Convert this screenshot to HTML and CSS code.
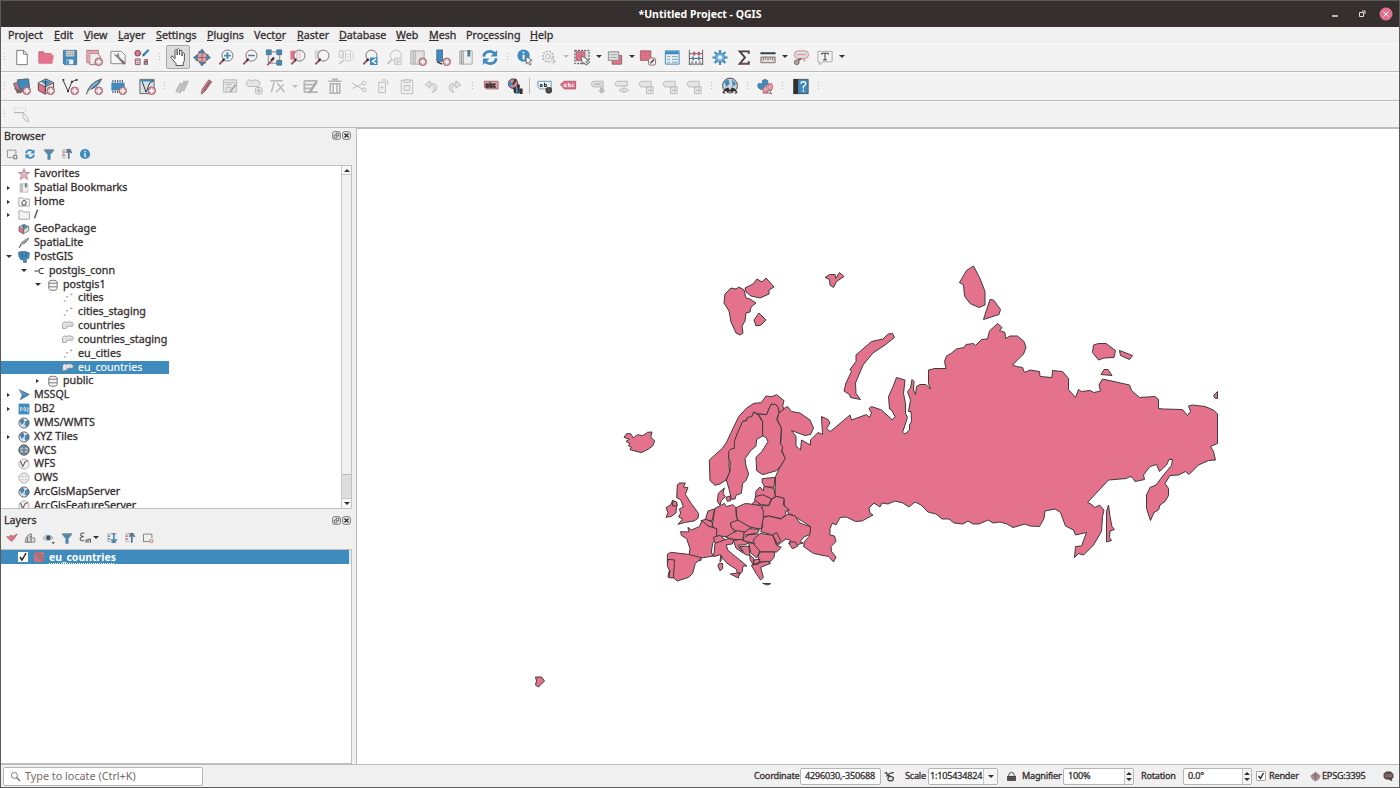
FILE: index.html
```html
<!DOCTYPE html>
<html lang="en">
<head>
<meta charset="utf-8">
<title>*Untitled Project - QGIS</title>
<link rel="stylesheet" href="styles.css">
</head>
<body>
<svg class="defs" width="0" height="0" fill="none" stroke-width="1.2">
<defs>
<g id="plus"><circle cx="15" cy="14.5" r="4" fill="#d8a5af" stroke="#a3606e"/><path d="M15 12v5M12.500 14.500h5" stroke="#fff" stroke-width="1.500"/></g>
<g id="gplus"><rect x="11.500" y="11" width="7" height="7" rx="2" fill="#e8e8e8" stroke="#b8b8b8"/><path d="M15 12.500v4M13 14.500h4" stroke="#aaa"/></g>
<g id="lens"><circle cx="11.500" cy="8" r="5.800" fill="#f4f4f4" stroke="#77696b"/><path d="M7.500 12.500L3 17" stroke="#a5576a" stroke-width="2.200"/><path d="M8.500 11.200L6.500 13.500" stroke="#352f30" stroke-width="2"/></g>
<symbol id="new" viewBox="0 0 20 20"><path d="M4.500 2.500h7l4 4v11h-11z" fill="#fff" stroke="#777"/><path d="M11.500 2.500v4h4" stroke="#777"/></symbol>
<symbol id="open" viewBox="0 0 20 20"><path d="M2.500 16V4h5l1 2h7v3" fill="#e5728c" stroke="#c06578"/><path d="M3 16.500l1.500-9h13.500l-1.500 9z" fill="#e5728c" stroke="#d88b9b" stroke-dasharray="1 1"/></symbol>
<symbol id="save" viewBox="0 0 20 20"><path d="M3 2.500h14v15H4.500L3 16z" fill="#3f8bbd" stroke="#51758c"/><path d="M5.500 3h9v6h-9z" fill="#ccc"/><path d="M6 5h8M6 7h8" stroke="#888" stroke-dasharray="1 1"/><path d="M6.500 12h7v5h-7z" fill="#eee"/><path d="M8 13v4" stroke="#3f8bbd" stroke-width="2"/></symbol>
<symbol id="layout" viewBox="0 0 20 20"><path d="M2.500 2.500h12v13h-12z" fill="#ddd" stroke="#9b7078"/><path d="M5.500 17.500v-12h8l3 3v4" fill="#eee" stroke="#9b7078"/><path d="M3 3h3v12H3zM6 3h8v2H6z" fill="#e5a0ad"/><path d="M5.500 17.500h7" stroke="#9b7078"/><use href="#plus"/></symbol>
<symbol id="manager" viewBox="0 0 20 20"><path d="M2.500 3.500h11l4 4v9h-15z" fill="#f7f7f7" stroke="#888"/><path d="M8 7l8 9" stroke="#888" stroke-width="2.400"/><path d="M6 6l2 3 3-1-1-3" stroke="#777"/><path d="M14 13l3 4" stroke="#8b6069" stroke-width="2"/></symbol>
<symbol id="style" viewBox="0 0 20 20"><circle cx="5.500" cy="5.500" r="3" fill="#e5728c" stroke="#6c4a50"/><path d="M11 8l6-6" stroke="#3f8bbd" stroke-width="2.500"/><path d="M10.500 8.500l2-2" stroke="#352f30"/><path d="M3 11.500h5v6H3z" fill="#ddd" stroke="#85575f"/><path d="M4 13h3M4 15.500h3" stroke="#c46a7c"/><path d="M12 12.500h3.500v5M15 14.500h-2.500v2.500h3" stroke="#85575f" stroke-width="1.400"/></symbol>
<symbol id="hand" viewBox="0 0 20 20"><path d="M7 12V3.500q1.200-2 2.200 0V8 2.500q1.300-1.800 2.300 0V8l.3-4.200q1.300-1.400 2.200.2V9l.4-3q1.400-1 2 .6V13q-.2 2-1.200 3v2.500H8V16.500L3 10.500q0-2.200 2-1.200z" fill="#fff" stroke="#555"/></symbol>
<symbol id="panmap" viewBox="0 0 20 20"><path d="M5 5h10v10H5z" fill="#e5a0ad" stroke="#966" transform="rotate(20 10 10)"/><path d="M10 1l3 4H7zM10 19l3-4H7zM1 10l4-3v6zM19 10l-4-3v6z" fill="#3f8bbd" stroke="#51687a" stroke-width=".8"/><path d="M10 6v8M6 10h8" stroke="#80636a"/></symbol>
<symbol id="zin" viewBox="0 0 20 20"><use href="#lens"/><path d="M11.500 4.500v7M8 8h7" stroke="#3f8bbd" stroke-width="2"/></symbol>
<symbol id="zout" viewBox="0 0 20 20"><use href="#lens"/><path d="M8 8h7" stroke="#5f7c90" stroke-width="1.600"/></symbol>
<symbol id="zfull" viewBox="0 0 20 20"><path d="M4 4h12v12H4z" fill="#eee" stroke="#888"/><path d="M2 2h5v5H2zM13 2h5v5h-5zM13 13h5v5h-5z" fill="#3f8bbd" stroke="#51758c"/><path d="M10 11l-7 7" stroke="#a5576a" stroke-width="2"/><path d="M10 10l-3 3" stroke="#352f30" stroke-width="2"/></symbol>
<symbol id="zsel" viewBox="0 0 20 20"><path d="M2 3h7v9H2z" fill="#e5728c"/><use href="#lens"/><path d="M9 3v10M12 3v9" stroke="#e0b0b8"/></symbol>
<symbol id="zlay" viewBox="0 0 20 20"><path d="M3 3h6v8H3z" fill="#ddd" stroke="#ccc"/><use href="#lens"/></symbol>
<symbol id="znat" viewBox="0 0 20 20"><g opacity=".55"><circle cx="12" cy="8" r="5.800" stroke="#aaa"/><path d="M7.500 12.500L3 17" stroke="#aaa" stroke-width="2"/><path d="M9.500 5v6M14.500 5v6M12 6v1M12 9v1M3 3h4v7H3z" stroke="#999"/></g></symbol>
<symbol id="zlast" viewBox="0 0 20 20"><use href="#lens"/><path d="M10 10h8v8h-8z" fill="#3f8bbd"/><path d="M16.500 11.500l-4 2.500 4 2.500" stroke="#fff" stroke-width="1.500"/></symbol>
<symbol id="znext" viewBox="0 0 20 20"><g opacity=".6"><circle cx="12" cy="8" r="5.800" stroke="#999"/><path d="M7.500 12.500L3 17" stroke="#aaa" stroke-width="2"/><path d="M10.500 10.500h7v7h-7z" fill="#ddd" stroke="#aaa"/><path d="M12.500 12l3 2-3 2" stroke="#999"/></g></symbol>
<symbol id="newmap" viewBox="0 0 20 20"><path d="M2.500 3h14v14h-14z" fill="#e2e2e2" stroke="#aaa"/><path d="M5 3v14M7 3v14" stroke="#aaa"/><use href="#plus"/></symbol>
<symbol id="newbm" viewBox="0 0 20 20"><path d="M4.500 2h6v12h-6z" fill="#3f8bbd" stroke="#51758c"/><path d="M5 14.500l5 2.500" stroke="#352f30" stroke-width="1.500"/><use href="#plus"/></symbol>
<symbol id="bms" viewBox="0 0 20 20"><path d="M3.500 3h13v14h-13z" fill="#eee" stroke="#aaa"/><path d="M5 3v14M7 3v14" stroke="#888"/><path d="M11.500 2h3v7h-3z" fill="#4f7896"/></symbol>
<symbol id="refresh" viewBox="0 0 20 20"><path d="M3.500 9Q4 3.500 10 3.500q3 0 5 2.500M16.500 11Q16 16.500 10 16.500q-3 0-5-2.500" stroke="#3f8bbd" stroke-width="3"/><path d="M17.500 2v7h-7zM2.500 18v-7h7z" fill="#3f8bbd"/></symbol>
<symbol id="ident" viewBox="0 0 20 20"><circle cx="8.500" cy="8" r="6.500" fill="#3f8bbd"/><path d="M8.500 7v5M8.500 4v1.500" stroke="#fff" stroke-width="2"/><path d="M11 9l6.500 4-3 1 2 3-1.500 1-2-3-1.500 2z" fill="#fff" stroke="#666"/></symbol>
<symbol id="gearg" viewBox="0 0 20 20"><g stroke="#b8b8b8"><circle cx="9" cy="9" r="5.500" stroke-width="2" stroke-dasharray="2 1.300"/><circle cx="9" cy="9" r="2.500"/><path d="M10 9l7 5-3 .5 1.500 3" fill="#eee"/></g></symbol>
<symbol id="select" viewBox="0 0 20 20"><path d="M2.500 2.500h15v14h-15z" fill="#dedede" stroke="#444" stroke-dasharray="2 1.300"/><path d="M4 4h9v9H4z" fill="#e5728c" stroke="#a46370"/><path d="M9 8l8 5-3 1 2 3-2 1-2-3-1.500 2z" fill="#fff" stroke="#666"/></symbol>
<symbol id="selform" viewBox="0 0 20 20"><path d="M7 8h10v9H7z" fill="#e5728c" stroke="#866"/><path d="M3 4h11v9H3z" fill="#ddd" stroke="#888"/><path d="M5 7h7M5 10h7" stroke="#aaa"/></symbol>
<symbol id="desel" viewBox="0 0 20 20"><path d="M2 3h11v10H2z" fill="#e5728c" stroke="#9a6570"/><path d="M4 5h7M4 8h7M4 11h5" stroke="#a66" stroke-dasharray="1 1"/><rect x="10.500" y="10.500" width="7.500" height="7.500" rx="2" fill="#eee" stroke="#966"/><path d="M12.500 16l4-4" stroke="#444" stroke-width="1.500"/></symbol>
<symbol id="table" viewBox="0 0 20 20"><path d="M3 3h14.500v14H3z" fill="#e8eef2" stroke="#3f8bbd"/><path d="M3 5h14" stroke="#3f8bbd" stroke-width="3"/><path d="M5 9h3M10 9h6M5 12h3M10 12h6M5 15h3M10 15h6" stroke="#78a8c5"/></symbol>
<symbol id="abacus" viewBox="0 0 20 20"><path d="M3 2v16M17 2v16M3 6h14M3 11h14M3 17h14" stroke="#655"/><path d="M8 4v4M13 4v4" stroke="#bd6174" stroke-width="2.500"/><path d="M7 9v4M13 9v4" stroke="#3f8bbd" stroke-width="2"/><path d="M6 14v3M10 14v3M14 14v3" stroke="#999" stroke-width="2"/></symbol>
<symbol id="gear" viewBox="0 0 20 20"><path d="M10 2v16M2 10h16M4.300 4.300l11.400 11.400M15.700 4.300L4.300 15.700" stroke="#3f8bbd" stroke-width="2.300"/><circle cx="10" cy="10" r="5" fill="#7ab0d2" stroke="#3f8bbd"/><circle cx="10" cy="10" r="2.200" fill="#eee"/></symbol>
<symbol id="sigma" viewBox="0 0 20 20"><path d="M15 6V3.500H5.500L11 10l-5.500 6.500H15V14" stroke="#4b3b3e" stroke-width="2"/><path d="M6 17h9" stroke="#bd6174"/></symbol>
<symbol id="ruler" viewBox="0 0 20 20"><path d="M2 5.500h16" stroke="#2f4250" stroke-width="2"/><path d="M2.500 9.500h15v6h-15z" fill="#ddd" stroke="#866"/><path d="M5 10v3M7.500 10v2M10 10v3M12.500 10v2M15 10v3" stroke="#755"/></symbol>
<symbol id="tips" viewBox="0 0 20 20"><rect x="3" y="3" width="15" height="8" rx="4" fill="#ddd" stroke="#d5899a"/><path d="M14 11v3l-4-3M6 7h9" stroke="#d5899a"/><circle cx="5.500" cy="15" r="2.500" fill="#aaa" stroke="#765"/><path d="M7 13l3-2" stroke="#765" stroke-width="2"/></symbol>
<symbol id="text" viewBox="0 0 20 20"><path d="M2.500 3.500h15v11H8l-4 3v-3H2.500z" fill="#f1f1f1" stroke="#aaa"/><path d="M6.500 7V5.500h7V7M10 5.500v7M8 12.500h4" stroke="#352f30"/></symbol>
<symbol id="dsm" viewBox="0 0 20 20"><path d="M1 7l13-5 4 10-13 5z" fill="#b5788a" stroke="#765"/><path d="M5 3l12-1 1 10-10 1z" fill="#3f8bbd" stroke="#567"/><path d="M2 12l6 5 4-3" fill="#866" stroke="#766"/><use href="#plus"/></symbol>
<symbol id="gpkg" viewBox="0 0 20 20"><path d="M2 6l8-4 8 4v7l-9 5-7-4z" fill="#ddd" stroke="#444"/><path d="M2 7l7 3v8l-7-4z" fill="#e5728c" stroke="#755"/><path d="M5 5l5-2 6 3-6 3z" fill="#3f8bbd"/><path d="M9.500 4v12M10 10l8-4" stroke="#444"/></symbol>
<symbol id="gpkgp" viewBox="0 0 20 20"><use href="#gpkg"/><use href="#plus"/></symbol>
<symbol id="shp" viewBox="0 0 20 20"><path d="M3 4l5 11 4-10 5-2" stroke="#333"/><path d="M2 3h2M11 5h2M16 3h2M7 15h2" stroke="#333" stroke-width="2"/><use href="#plus"/></symbol>
<symbol id="feather" viewBox="0 0 20 20"><path d="M2 18Q5 6 18 2q-4 8-11 10z" fill="#888" stroke="#444"/><path d="M5 14Q9 8 15 4" stroke="#eee"/></symbol>
<symbol id="spl" viewBox="0 0 20 20"><path d="M2 18Q5 6 18 2q-4 9-12 11z" fill="#3f8bbd" stroke="#555"/><path d="M3 17Q7 9 14 5" stroke="#ddd"/><use href="#plus"/></symbol>
<symbol id="mem" viewBox="0 0 20 20"><path d="M3 6h14v8H3z" fill="#3f8bbd"/><path d="M4 4.500h12M4 15.500h12" stroke="#567" stroke-width="2.500" stroke-dasharray="1.300 1.200"/><use href="#plus"/></symbol>
<symbol id="virt" viewBox="0 0 20 20"><path d="M2.500 2.500h15v15h-15z" fill="#d8e0e4" stroke="#666"/><path d="M3 4h14" stroke="#3f8bbd" stroke-width="1.500"/><path d="M5 5l4 11 4-10 4-2" stroke="#333"/><use href="#plus"/></symbol>
<symbol id="edits" viewBox="0 0 20 20"><path d="M4 16l5-10M7 17l6-13M11 15l5-11" stroke="#bbb" stroke-width="2.600"/></symbol>
<symbol id="pencil" viewBox="0 0 20 20"><path d="M5 18l1-5 7-10 3 2-7 10z" fill="#e5728c" stroke="#866"/><path d="M8 14l6-9" stroke="#555"/></symbol>
<symbol id="gsave" viewBox="0 0 20 20"><path d="M3 3h14v13H3zM3 6h14M6 16v-5h5v5M6 8h6" fill="#e6e6e6" stroke="#bbb"/><path d="M10 16l6-8" stroke="#aaa" stroke-width="2"/></symbol>
<symbol id="gblob" viewBox="0 0 20 20"><path d="M2 6q2-5 6-2 4-2 7 0 3 4-1 6H7q-5 1-5-4z" fill="#e4e4e4" stroke="#bbb"/><use href="#gplus"/></symbol>
<symbol id="gvert" viewBox="0 0 20 20"><path d="M2 4h13M6 5l-3 11M9 6l8 10M16 8l-8 8" stroke="#bbb" stroke-width="1.500"/></symbol>
<symbol id="gmulti" viewBox="0 0 20 20"><path d="M3 4h14M3 8h10M3 12h9M3 16h14M3 4v12" stroke="#b5b5b5" stroke-width="1.800"/><path d="M8 17l8-12" stroke="#aaa" stroke-width="2.500"/></symbol>
<symbol id="trash" viewBox="0 0 20 20"><path d="M3 4.500h14M7 2.500h6M5 7h10v10H5zM8 8v9M12 8v9" stroke="#b2b2b2" stroke-width="1.600"/></symbol>
<symbol id="cut" viewBox="0 0 20 20"><path d="M2 6l12 7M3 12l11-5" stroke="#bbb"/><circle cx="15.500" cy="6.500" r="2" stroke="#bbb"/><circle cx="15.500" cy="13.500" r="2" stroke="#bbb"/></symbol>
<symbol id="copy" viewBox="0 0 20 20"><path d="M5.500 5.500h7v11h-7zM9 3h4l2 2v3" stroke="#bbb" fill="#f1f1f1"/><path d="M9 9v4M7 11h4" stroke="#ccc"/></symbol>
<symbol id="paste" viewBox="0 0 20 20"><path d="M4 3.500h12v14H4z" stroke="#bbb"/><path d="M7 3h6v3H7zM7 9h6v5H7z" fill="#eee" stroke="#bbb"/></symbol>
<symbol id="undo" viewBox="0 0 20 20"><path d="M9 4L4 8l5 4V9q5-1 4 5l-2 2q6-1 5-6-1-4-7-3z" fill="#e4e4e4" stroke="#b8b8b8"/></symbol>
<symbol id="redo" viewBox="0 0 20 20"><path d="M11 4l5 4-5 4V9q-5-1-4 5l2 2q-6-1-5-6 1-4 7-3z" fill="#e4e4e4" stroke="#b8b8b8"/></symbol>
<symbol id="abc" viewBox="0 0 20 20"><path d="M3 4.500h14.500v8H5l-2-2z" fill="#dba3ad" stroke="#a66"/><path d="M5 7.500h2v3H5zM9 5.500v5h2v-3H9M15 7.500h-2v3h2" stroke="#222" stroke-width="1.400"/></symbol>
<symbol id="diag" viewBox="0 0 20 20"><circle cx="8" cy="7" r="5" fill="#c98b96" stroke="#533"/><path d="M3 4l6 4-6 2z" fill="#3f8bbd"/><path d="M8 8l3-6" stroke="#333" stroke-width="2"/><path d="M8 11h3v6H9zM12 8h3v9h-3z" fill="#352f30"/><path d="M11 11h2v7h-2z" fill="#3f8bbd"/><path d="M15 12h3v6h-3z" fill="#352f30"/></symbol>
<symbol id="abp" viewBox="0 0 20 20"><path d="M2.500 4.500h14v8h-12l-2-2z" fill="#eee" stroke="#5f9ec5"/><path d="M5 8h2v2H5zM9.500 6v4h2V8h-2" stroke="#222"/><circle cx="14" cy="14" r="3.500" fill="#444"/><path d="M14 13v2" stroke="#b56"/></symbol>
<symbol id="abr" viewBox="0 0 20 20"><path d="M1 8l4-3.500h12v8H5z" fill="#e5728c" stroke="#b05a6d"/><path d="M5 8h2v2H5zM9.500 6v4h2V8h-2M15 8h-1.500v2H15" stroke="#fff"/></symbol>
<symbol id="glab" viewBox="0 0 20 20"><path d="M2.500 7l2-2.500h11v6h-11z" fill="#ddd" stroke="#bcbcbc"/><path d="M6 7.500h7" stroke="#aaa"/><path d="M12 11h4v3h2l-4 4-4-4h2z" fill="#bbb"/></symbol>
<symbol id="geye" viewBox="0 0 20 20"><path d="M2.500 7l2-2.500h11v5h-11zM7 14q5-5 10 0-5 4-10 0M12 13v2" fill="#e5e5e5" stroke="#b5b5b5"/></symbol>
<symbol id="garrow" viewBox="0 0 20 20"><path d="M2.500 7l2-2.500h11v6h-11z" fill="#e5e5e5" stroke="#bcbcbc"/><path d="M10.500 10.500h7v7h-7zM12 14h4l-2-2m2 2l-2 2" fill="#e8e8e8" stroke="#b5b5b5"/></symbol>
<symbol id="meta" viewBox="0 0 20 20"><circle cx="10" cy="9" r="7.800" fill="#cbd4da" stroke="#444"/><path d="M4 5l4-2 1 4-3 3M12 3l4 4-3 3" fill="#3f8bbd" stroke="#3f8bbd"/><path d="M5 12l3-1 2 3 2-3 3 1 3 4q-2 3-5 0l-3-1-3 1q-4 3-5 0z" fill="#352f30"/><circle cx="5.500" cy="16" r="1.300" fill="#ddd"/><circle cx="14.500" cy="16" r="1.300" fill="#ddd"/></symbol>
<symbol id="py" viewBox="0 0 20 20"><path d="M7 4q3-3 6 0v4l-4 2-1 3H5q-4-2-2-6h5z" fill="#3f8bbd" stroke="#51758c"/><path d="M8 11l5-1 1-3h3q2 3 0 7h-4v3H8z" fill="#e5a0ad" stroke="#b67"/><path d="M14 12l3 6M10 15l7 3" stroke="#777"/></symbol>
<symbol id="help" viewBox="0 0 20 20"><path d="M2.500 2.500h15v15h-15z" fill="#3f8bbd" stroke="#48555e"/><path d="M2 2h5v16H2z" fill="#352f30"/><path d="M10 7q0-2 2.500-2T15 7q0 1.500-2.500 3v2M12.500 13.500v2" stroke="#fff" stroke-width="1.400"/></symbol>
<symbol id="boxsel" viewBox="0 0 20 20"><path d="M2 8V3h12v5" stroke="#c4c4c4" stroke-dasharray="1 1"/><path d="M2 8h10" stroke="#aaa"/><path d="M11 8l5 5 1 5-4-2-2-4z" fill="#eee" stroke="#bbb"/></symbol>
<symbol id="addl" viewBox="0 0 20 20"><path d="M12 16H2.500V3.500h14V10" stroke="#888" stroke-width="1.400"/><path d="M13 12h5v6h-5z" fill="#eee" stroke="#665" stroke-width="1.500"/></symbol>
<symbol id="funnel" viewBox="0 0 20 20"><path d="M2 4h16l-6 7v8H8v-8z" fill="#3f8bbd" stroke="#5d7c8f"/><path d="M2 3.500h16" stroke="#888" stroke-width="3"/></symbol>
<symbol id="coll" viewBox="0 0 20 20"><path d="M9 3H3v13h6" stroke="#999"/><path d="M3 7h4M3 12h4" stroke="#c98593" stroke-width="3"/><path d="M13 18V4M9 8l4-5 5 5" stroke="#4c7896" stroke-width="2.800"/><path d="M8 3h9" stroke="#755" stroke-width="1.500"/></symbol>
<symbol id="expd" viewBox="0 0 20 20"><path d="M9 3H3v13h6" stroke="#999"/><path d="M3 7h4M3 12h4" stroke="#829aaa" stroke-width="3"/><path d="M13 2v14M9 12l4 5 5-5" stroke="#3f8bbd" stroke-width="2.800"/><path d="M9 3h8M9 17h8" stroke="#667" stroke-width="1.500"/></symbol>
<symbol id="info" viewBox="0 0 20 20"><circle cx="10" cy="10" r="8.500" fill="#3f8bbd"/><path d="M10 8v7M10 4.500v2" stroke="#fff" stroke-width="2.200"/></symbol>
<symbol id="star" viewBox="0 0 20 20"><path d="M10 1l2.500 6.500H19l-5 4.500 2 7-6-4-6 4 2-7-5-4.500h6.500z" fill="#c8c4c4" stroke="#e5728c" stroke-width="1.500"/></symbol>
<symbol id="folder" viewBox="0 0 20 20"><path d="M1.500 17V3h6l1.500 2h10v12z" fill="#f5f5f5" stroke="#777"/></symbol>
<symbol id="home" viewBox="0 0 20 20"><use href="#folder"/><path d="M5.500 11L10 7l5 4M7 11v4h6v-4" stroke="#444" stroke-width="1.600"/></symbol>
<symbol id="eleph" viewBox="0 0 20 20"><path d="M1 2q9-4 18 1l-1 9-4 1v6h-5v-5l-4 1q-5-5-4-13z" fill="#3f8bbd" stroke="#456"/><path d="M7 3v9M13 3v7" stroke="#346"/></symbol>
<symbol id="conn" viewBox="0 0 20 20"><path d="M1 10h8M19 5h-5q-4 0-4 5t4 5h5" stroke="#333" stroke-width="2"/></symbol>
<symbol id="schema" viewBox="0 0 20 20"><path d="M3 5q0-3 7-3t7 3v11q0 3-7 3t-7-3zM3 7h14M3 13h14" fill="#f4f4f4" stroke="#666" stroke-width="1.400"/></symbol>
<symbol id="points" viewBox="0 0 20 20"><path d="M3 15h3M7 8h3M14 4h3" stroke="#aaa" stroke-width="2.600"/></symbol>
<symbol id="poly" viewBox="0 0 20 20"><path d="M1 14V6q3-5 6-2 5-2 10 0 4 3 0 7-4-2-7 0-3 5-9 3z" fill="#e5e5e5" stroke="#777"/><path d="M6 10h3M13 8h2" stroke="#888"/></symbol>
<symbol id="mssql" viewBox="0 0 20 20"><path d="M2 1l17 8-15 9 3-8z" fill="#3f8bbd" stroke="#567"/><path d="M3 2l8 8" stroke="#cab"/></symbol>
<symbol id="db2" viewBox="0 0 20 20"><path d="M1 1h18v18H1z" fill="#3f8bbd"/><path d="M4 7v6q3 0 3-3t-3-3M10 7v6h2l1-2-1-4zM15 8h2v3h-2v3h3" stroke="#cfdde5" stroke-width="1.600"/></symbol>
<symbol id="globe" viewBox="0 0 20 20"><circle cx="10" cy="10" r="8.500" fill="#dce3e7" stroke="#667" stroke-width="1.600"/><path d="M3 7l5-4 2 5-4 5M12 8l5-2 1 6-4 4-3-3" fill="#3f8bbd" stroke="#456"/></symbol>
<symbol id="wcs" viewBox="0 0 20 20"><circle cx="10" cy="10" r="8.500" fill="#a8c0cf" stroke="#333" stroke-width="1.600"/><path d="M2 10h16M10 2v16M4 5h12M4 15h12" stroke="#345"/></symbol>
<symbol id="wfs" viewBox="0 0 20 20"><circle cx="10" cy="10" r="8.500" fill="#f0f0f0" stroke="#888"/><path d="M4 5l4 9 4-8 5-2" stroke="#755" stroke-width="1.800"/></symbol>
<symbol id="ows" viewBox="0 0 20 20"><circle cx="10" cy="10" r="8.500" fill="#f5f5f5" stroke="#888"/><path d="M2 7h16M2 13h16M7 2v16M13 2v16" stroke="#aaa" stroke-dasharray="2 1"/></symbol>
<symbol id="brush" viewBox="0 0 20 20"><path d="M1 8l8 8 4-4 6-9-7 4-4-2-2 3z" fill="#e5728c" stroke="#955"/></symbol>
<symbol id="lgroup" viewBox="0 0 20 20"><path d="M2 17q1-10 7-13l3-1v14zM6 17V9M9 8h3" fill="#ddd" stroke="#666" stroke-width="1.500"/><path d="M12 10h6v7h-6z" fill="#ddd" stroke="#555"/></symbol>
<symbol id="eye" viewBox="0 0 20 20"><path d="M0 10q8-10 17 0-8 8-17 0z" fill="#ddd" stroke="#777"/><circle cx="9" cy="9.500" r="3.800" fill="#35566c"/><path d="M14 17h6l-3 3z" fill="#333"/></symbol>
<symbol id="eps" viewBox="0 0 20 20"><path d="M9 2q-7-1-6 3 1 3 5 3-7 0-6 4t7 2M12 12v6M15 18v-6h4v6" stroke="#555" stroke-width="1.800"/></symbol>
<symbol id="rml" viewBox="0 0 20 20"><path d="M12 16H2.500V3.500h14V10" stroke="#777" stroke-width="1.500"/><circle cx="15.500" cy="15" r="3" fill="#ecc" stroke="#b05a6d"/></symbol>
<symbol id="search" viewBox="0 0 20 20"><circle cx="8" cy="8" r="5.500" stroke="#666" stroke-width="1.500"/><path d="M12 12l6 6" stroke="#555" stroke-width="2.200"/></symbol>
<symbol id="track" viewBox="0 0 20 20"><path d="M1 3l17 10M4 10q3-4 7-6 4-1 7-1M4 2l5 10" stroke="#443a3b" stroke-width="2"/><rect x="7" y="10" width="10" height="8" rx="4" stroke="#443a3b" stroke-width="2" fill="#ddd"/></symbol>
<symbol id="lock" viewBox="0 0 20 20"><path d="M5 10V6q5-7 10 0v4" stroke="#777" stroke-width="2"/><path d="M2 9h16v9H2z" fill="#443a3b"/><path d="M3 12h14M3 15h14" stroke="#777"/></symbol>
<symbol id="crs" viewBox="0 0 20 20"><path d="M10 1l9 8q-1 7-9 10Q2 16 1 9z" fill="#b39ba0"/><path d="M1 9h18M4 6h12M4 13h12M10 2v16" stroke="#665055"/></symbol>
<symbol id="msg" viewBox="0 0 20 20"><path d="M1 5l5-4h8l5 5v6l-3 3 1 4-6-3-7-1-3-4z" fill="#554447"/><path d="M5 6v5h4V6zM12 6h3v5h-3z" stroke="#d0a5ad"/></symbol>
<symbol id="flt" viewBox="0 0 20 20"><rect x="1.500" y="1.500" width="17" height="17" rx="4" stroke="#666" stroke-width="2"/><path d="M5 9h6v6H5zM9 9V5h6v6h-4" stroke="#555" stroke-width="1.800"/></symbol>
<symbol id="cls" viewBox="0 0 20 20"><rect x="1.500" y="1.500" width="17" height="17" rx="4" stroke="#666" stroke-width="2"/><path d="M5.500 5.500l9 9M14.500 5.500l-9 9" stroke="#333" stroke-width="3"/></symbol>
</defs>
</svg>

<div class="window">
<header class="title"><span class="caption">*Untitled Project - QGIS</span>
<span class="wbtns"><svg width="6" height="8"><path d="M0 6h6" stroke="#fff" stroke-width="1.300"/></svg><svg width="8" height="8" fill="none" stroke="#ddd"><path d="M1.500 2.500h4v4h-4zM4 1h3v3"/></svg><svg width="14" height="14"><circle cx="7" cy="7" r="6.500" fill="#e5728c"/><path d="M4.500 4.500l5 5M9.500 4.500l-5 5" stroke="#fff"/></svg></span></header>

<nav class="menu"><span>Pro<u>j</u>ect</span><span><u>E</u>dit</span><span><u>V</u>iew</span><span><u>L</u>ayer</span><span><u>S</u>ettings</span><span><u>P</u>lugins</span><span>Vect<u>o</u>r</span><span><u>R</u>aster</span><span><u>D</u>atabase</span><span><u>W</u>eb</span><span><u>M</u>esh</span><span>Pro<u>c</u>essing</span><span><u>H</u>elp</span></nav>

<div class="bar bar1"><i class="grip first"></i><svg><use href="#new"/></svg><svg><use href="#open"/></svg><svg><use href="#save"/></svg><svg><use href="#layout"/></svg><svg><use href="#manager"/></svg><svg><use href="#style"/></svg><i class="grip"></i><svg class="on"><use href="#hand"/></svg><svg><use href="#panmap"/></svg><svg><use href="#zin"/></svg><svg><use href="#zout"/></svg><svg><use href="#zfull"/></svg><svg><use href="#zsel"/></svg><svg><use href="#zlay"/></svg><svg><use href="#znat"/></svg><svg><use href="#zlast"/></svg><svg><use href="#znext"/></svg><svg><use href="#newmap"/></svg><svg><use href="#newbm"/></svg><svg><use href="#bms"/></svg><svg><use href="#refresh"/></svg><i class="grip narrow"></i><svg><use href="#ident"/></svg><svg><use href="#gearg"/></svg><b class="dd off"></b><svg><use href="#select"/></svg><b class="dd"></b><svg><use href="#selform"/></svg><b class="dd"></b><svg><use href="#desel"/></svg><svg><use href="#table"/></svg><svg><use href="#abacus"/></svg><svg><use href="#gear"/></svg><svg><use href="#sigma"/></svg><svg><use href="#ruler"/></svg><b class="dd"></b><svg><use href="#tips"/></svg><svg><use href="#text"/></svg><b class="dd"></b></div>

<div class="bar bar2"><i class="grip first"></i><svg><use href="#dsm"/></svg><svg><use href="#gpkgp"/></svg><svg><use href="#shp"/></svg><svg><use href="#spl"/></svg><svg><use href="#mem"/></svg><i class="gap"></i><svg><use href="#virt"/></svg><i class="grip narrow"></i><svg><use href="#edits"/></svg><svg><use href="#pencil"/></svg><svg><use href="#gsave"/></svg><svg><use href="#gblob"/></svg><svg><use href="#gvert"/></svg><b class="dd off"></b><svg><use href="#gmulti"/></svg><svg><use href="#trash"/></svg><svg><use href="#cut"/></svg><svg><use href="#copy"/></svg><svg><use href="#paste"/></svg><svg><use href="#undo"/></svg><svg><use href="#redo"/></svg><i class="grip"></i><svg><use href="#abc"/></svg><svg><use href="#diag"/></svg><i class="gap line"></i><svg><use href="#abp"/></svg><svg><use href="#abr"/></svg><i class="gap"></i><svg><use href="#glab"/></svg><svg><use href="#geye"/></svg><svg><use href="#garrow"/></svg><svg><use href="#garrow"/></svg><svg><use href="#garrow"/></svg><i class="grip"></i><svg><use href="#meta"/></svg><i class="grip narrow"></i><svg><use href="#py"/></svg><i class="grip"></i><svg><use href="#help"/></svg><i class="grip"></i></div>

<div class="bar bar3"><i class="grip first"></i><svg><use href="#boxsel"/></svg></div>

<main>
<aside>
<section class="dock browser">
<h2>Browser<span><svg><use href="#flt"/></svg><svg><use href="#cls"/></svg></span></h2>
<div class="tools"><svg><use href="#addl"/></svg><svg><use href="#refresh"/></svg><svg><use href="#funnel"/></svg><svg><use href="#coll"/></svg><svg><use href="#info"/></svg></div>
<div class="treebox">
<ul class="tree">
<li><svg><use href="#star"/></svg>Favorites</li>
<li class="c"><svg><use href="#bms"/></svg>Spatial Bookmarks</li>
<li class="c"><svg><use href="#home"/></svg>Home</li>
<li class="c"><svg><use href="#folder"/></svg>/</li>
<li><svg><use href="#gpkg"/></svg>GeoPackage</li>
<li><svg><use href="#feather"/></svg>SpatiaLite</li>
<li class="o"><svg><use href="#eleph"/></svg>PostGIS</li>
<li class="o l1"><svg class="thin"><use href="#conn"/></svg>postgis_conn</li>
<li class="o l2"><svg><use href="#schema"/></svg>postgis1</li>
<li class="l3"><svg><use href="#points"/></svg>cities</li>
<li class="l3"><svg><use href="#points"/></svg>cities_staging</li>
<li class="l3"><svg><use href="#poly"/></svg>countries</li>
<li class="l3"><svg><use href="#poly"/></svg>countries_staging</li>
<li class="l3"><svg><use href="#points"/></svg>eu_cities</li>
<li class="l3 sel"><svg><use href="#poly"/></svg>eu_countries</li>
<li class="c l2"><svg><use href="#schema"/></svg>public</li>
<li class="c"><svg><use href="#mssql"/></svg>MSSQL</li>
<li class="c"><svg><use href="#db2"/></svg>DB2</li>
<li><svg><use href="#globe"/></svg>WMS/WMTS</li>
<li class="c"><svg><use href="#globe"/></svg>XYZ Tiles</li>
<li><svg><use href="#wcs"/></svg>WCS</li>
<li><svg><use href="#wfs"/></svg>WFS</li>
<li><svg><use href="#ows"/></svg>OWS</li>
<li><svg><use href="#globe"/></svg>ArcGisMapServer</li>
<li><svg><use href="#wfs"/></svg>ArcGisFeatureServer</li>
</ul>
<div class="scroll"><i class="up"></i><i class="thumb"></i><i class="down"></i></div>
</div>
</section>
<section class="dock layers">
<h2>Layers<span><svg><use href="#flt"/></svg><svg><use href="#cls"/></svg></span></h2>
<div class="tools"><svg><use href="#brush"/></svg><svg><use href="#lgroup"/></svg><svg><use href="#eye"/></svg><svg><use href="#funnel"/></svg><svg><use href="#eps"/></svg><b class="dd"></b><svg><use href="#expd"/></svg><svg><use href="#coll"/></svg><svg><use href="#rml"/></svg></div>
<div class="layerbox"><div class="layer"><svg class="check" viewBox="0 0 10 10"><path d="M0 0h10v10H0z" fill="#fff"/><path d="M2 5l2 3 4-7" fill="none" stroke="#222" stroke-width="1.500"/></svg><i class="swatch"></i><span>eu_countries</span></div></div>
</section>
</aside>
<div class="map">
<svg viewBox="357 129 1041 635" width="1041" height="635">
<path d="M778.500 411.500L787.500 406.500 791.500 411.500 800 413 810 420 813.500 428 810.500 434.500 805 435.500 791.500 430.500 796 436.500 796 446 800.500 450 801.500 440 810.500 445 810.500 440 818 432.500 822.500 434.500 821.500 416.500 828 419.500 830 423 826.500 428.500 830 431.500 834 428.500 850 415 851.500 420 866.500 414.500 869.500 417.500 871.500 413 869 408.500 871.500 406.500 881.500 410 892.500 420 895 416.500 891.500 410 889.500 409 888.500 396.500 892.500 388 896.500 377.500 905 380 903.500 393.500 905.500 403.500 905.500 413.500 907.500 417.500 902.500 432.500 905 434 909.500 430 909.500 425 911.500 421.500 911 411.500 908.500 411.500 910.500 400 907.500 391.500 910.500 388 912 379.500 914 381.500 913.500 390 915.500 394.500 916.500 386.500 920 384.500 926 384.500 930.500 389 928.500 383.500 928.500 370 935 368.500 946 368.500 944.500 361.500 946.500 356 951 353.500 956.500 349 964 347.500 966 344.500 973.500 343.500 975.500 345.500 981.500 339.500 987.500 339 989.500 331 997.500 323.500 1002 327.500 999.500 330.500 1005 332.500 1005.500 338.500 1010 336 1017.500 336 1024 341.500 1026 347.500 1023.500 354 1012.500 365 1016.500 366.500 1022.500 367.500 1024.500 372.500 1030 370 1039.500 371.500 1040 376.500 1052 377.500 1052.500 370.500 1062.500 371.500 1068.500 378.500 1068.500 389.500 1075.500 397.500 1078.500 389.500 1081.500 391.500 1090 390.500 1094 392.500 1100.500 391 1099 385 1102.500 379 1129.500 385 1131.500 390.500 1139.500 397.500 1155 396.500 1158.500 399.500 1158.500 408.500 1163.500 409 1182.500 409.500 1187.500 415.500 1190.500 411.500 1188.500 406 1192.500 405 1205 406.500 1213.500 410 1217.500 414 1217.500 443.500 1210.500 446.500 1213.500 451.500 1215.500 460 1208.500 460.500 1198.500 465 1189 474.500 1185.500 471.500 1178.500 475 1170 475.500 1165 483.500 1168.500 488.500 1168.500 495.500 1165 501.500 1160 505 1158.500 510 1154 512.500 1150.500 520.500 1146.500 508.500 1146.500 495 1150 487.500 1156 485 1163.500 475 1171.500 465.500 1172.500 459.500 1169 459.500 1166.500 465 1159.500 471.500 1156.500 464.500 1150 466.500 1143.500 475 1144.500 479.500 1135 481.500 1132.500 477.500 1130 476.500 1126.500 478.500 1108.500 480 1087.500 502.500 1091 504 1095 507.500 1099.500 505 1104 510 1102.500 516.500 1101.500 531.500 1093.500 545 1083.500 555 1078.500 553.500 1074.500 557.500 1075.500 546.500 1081.500 546 1086.500 532.500 1075.500 535 1073.500 530 1065.500 526 1060.500 512.500 1055 509 1045 511 1044 518.500 1039.500 526.500 1030 526 1025 524 1013 527.500 1007 524 1000 522 993 523 988 520 979 524 973 524 968 521 963 524 954 523 949 519 942 519 936 514 928 512 921 505 915 502 909 507 903 503 895 501 888 504 882 503 880 507 874 503 869 508 870 513 873 515 862 521 855.500 521.500 846.500 517 840 517.500 836 525 832.500 523 830 528.500 830 535 834.500 536 836 541.500 831 546.500 831.500 551.500 836 557 833.500 562 828.500 556.500 813.500 553.500 803.500 546.500 804.500 541.500 809 536.500 810.500 526.500 792.500 515 788.500 513.500 784.500 506.500 784 498.500 775 496 775.500 476.500 778.500 470 785 458.500 780.500 446.500 781.500 428.500 777.500 420z"/>
<g transform="translate(600 380) scale(.33333)">
<path d="M72 172l8-11h12l8 13 12-10 16 3 12-8 2-2 14-1-4 15 12 12-6 15-14 10-20 10-34-9 4-8-9-4 5-6-12-7 10-6z"/>
<path d="M328 240L368 204 380 186 392 160 416 110 440 84 462 70 484 68 498 48 515 50 530 44 552 62 548 78 552 88 538 98 530 76 514 72 508 84 500 104 475 102 462 96 455 110 430 124 410 165 403 205 388 215 387 262 390 275 378 300 360 312 345 316 330 302z"/>
<path d="M462 96L475 106 488 125V168L470 178 468 198 452 212 435 236 438 258 446 282 438 302 428 310 424 340 408 346 405 357 394 358 388 330 379 300 390 275 391 245 386 235 386 215 393 207 403 205 403 185 410 165 428 124 440 122 442 112 455 110z"/>
<path d="M475 102L500 104 508 84 512 75 524 72 534 80 537 98 530 118 544 145 541 190 548 200 545 215 556 235 542 258 530 272 516 276 488 284 470 272 468 232 485 215 504 185 498 172 488 168 488 125z"/>
<path d="M487 296l38-4-3 30-28-2-8-14z"/><path d="M468 333l12-12 10 12 2-14 30 6 4 25-12 8-24-11-20 3-4 8z"/><path d="M466 350l22-6 26 12-8 20-24-2-18-10z"/><path d="M457 370l10-8 16 12-22 4z"/>
<path d="M516 357l14-8 22 6-2 20 18 15-12 4 2 10-14 12-38-8-18 2-2-34 20 2z"/>
<path d="M486 414l20-6 36 9 22-14 20 4 16 22 32 12-2 22-18 8-12 14 10 4-14 4-20 12-2-10-8-4 6-10-14-4-14 10-12 10-20-34-30-8 6-16z"/>
<path d="M408 383l26-12 10 0 38 6 8 16v20l-6 34-16-2-18-4-18-8-20-6z"/>
<path d="M345 385l16-8 12-7 6 10 20-6 8 8 2 26 4 16-22 8 14 26-10 12-50-2 4-16-12-16z"/>
<path d="M355 340l18-16-4 16 7 10-12 12-4 14-8-12z"/><path d="M378 352l12-4 2 14-10 2z"/>
<path d="M344 387l-20 6-8 26 20 4z"/><path d="M303 422l14-4 20 8v18l-14-2z"/>
<path d="M242 455l24 1-2-14 10 8 24-10 8-18 18 16 26 8 0 30-12 14-4 26 6 12-36 6-2 8-36-8 4-28-10-30-16-10z"/>
<path d="M202 523l10-6 54 6 40 11-20 16-8 30-12 12-34 11-14-12-14-1 6-28-8-14z"/><path d="M204 538l20 2-4 54-14-1 4-20-8-14z"/>
<path d="M232 315l6-6h18l-6 12 14 2-8 20 18 28 22 30-2 14-12 8-26 4-22 6 14-16-12-6 6-12-4-12 12-6-8-22-12-6z"/><path d="M198 383l14-8 6-14 12 8-2 30-14 10-16 3 6-14z"/><path d="M218 362l12 4 2 12-14 0z"/>
<path d="M392 428l22-8 40 24-16 12-22 2-22-14z"/><path d="M395 460l18-8 20 4-4 24-30-2-22-6z"/><path d="M340 472l20-6 14 12-12 8-16 4z"/><path d="M345 490l40-14 16 2-4 14-18 2 4 16 24 20 34 28-12 0-2 16-12 14-6-20-30-20-18-24-20 6z"/>
<path d="M391 582l28-4-4 16z"/><path d="M362 526l4 12-6 8zM357 550h11v16l-8 6-6-14z"/><path d="M430 460l18-14 30 2-4 10-40 8zM428 474l20-10 28-2 4 8-24 18-22-4z"/><path d="M400 482l22-4 24 10-10 6-22 2 16 24-22-16z"/><path d="M420 500l26-2 4 28-14-2zM446 488l22 4 12 20-10 22-18-16z"/><path d="M460 480l20-20 38 6 12 30 14 6-14 14h-48l-18-20z"/><path d="M518 464l12-6 12 24-10 10zM480 516l44 0-2 16-10 12-32 2-6-16z"/><path d="M450 526l12 10-2 20-10-18zM460 540l20-2-4 14-14 2zM454 556l22-8 26-4 10 6-30 12 8 30-8 8-14-20z"/>
<path d="M488 610l24 1-10 4z"/><path d="M568 486h18l8 12-16 8-8-10z"/>
</g>
<path d="M725 294l6-6 5 1 3-2 5 3 2 8 4 1 6 4-5 4-1 5-4 1-1 8-3 5 1 7-3 2-4-2-5-11-2-11-5-8zM745 288l8-4 4-5 5 3 4-4 8 9-5 3 0 4-9 4-9-2-5-4zM754 320l5-7 7 7-5 5-5 1z"/>
<path d="M825 277.500l4.500-3h5.500l.5 4 4-6 4.500 4-7.500 5-3 6-3.500-2.500-.5-5.500z"/>
<path d="M973.500 266L980 278.500 985 291.500V305L979 307.500 970 303.500 964.500 296 963.500 285 959.500 282.500 966.500 270.500zM990 299.500L993.500 300 1000.500 309.500 999 314.500 983.500 319.500 986.500 310z"/>
<path d="M871.500 341.500L883 339 888 334 892.500 333.500 894.500 337.500 885 345 873 353 863 365 855.500 383 856 393.500 860.500 399.500 850.500 397.500 849.500 394.500 844 391 846 383 851.500 371.500 850 369.500 856 361.500V355z"/>
<path d="M1093.500 345L1098.500 343.500H1106L1115.500 350.500 1114 357.500 1104 358 1098.500 360 1092.500 352.500zM1119.500 350.500l13 5-3 4-9-4zM1101 374.500l3-5 4 0 4 6zM1213.500 395.500l4-4v7l-2.500-.500zM1108.500 505L1110 516.500 1112 526.500 1114.500 529.500 1110 531 1109.500 537.500 1111.500 540.500 1106.500 542V511.500z"/>
<path d="M535.500 677l6 0 3 4-6 6-3-2 1-4z"/>
</svg>
</div>
</main>

<footer><div class="locate"><svg><use href="#search"/></svg>Type to locate (Ctrl+K)</div>
<div class="stat"><label class="w46">Coordinate</label><span class="field f81">4296030,-350688</span><svg class="m3"><use href="#track"/></svg><label class="w23 m10">Scale</label><span class="field f70">1:105434824<i class="combo"></i></span><svg class="m8"><use href="#lock"/></svg><label class="w41 m5">Magnifier</label><span class="field f71">100%<i class="spin"></i></span><label class="w42 m7">Rotation</label><span class="field f69">0.0°<i class="spin"></i></span><svg class="cb" viewBox="0 0 10 10"><path d="M.5.5h9v9h-9z" fill="#fff" stroke="#aaa"/><path d="M2.500 5l2 2.500 3-5.500" fill="none" stroke="#222" stroke-width="1.300"/></svg><label class="w41">Render</label><svg><use href="#crs"/></svg><label class="w61">EPSG:3395</label><svg><use href="#msg"/></svg></div></footer>
</div>
</body>
</html>
```
FILE: styles.css
```css
* { box-sizing: border-box; }
body { margin: 0; width: 1400px; height: 788px; overflow: hidden; background: #f0f0f0; color: #352f30; font: 10.700px/14px "Noto Sans", "Open Sans", sans-serif; -webkit-text-stroke: .3px currentColor; }
.defs { position: absolute; }
.window { width: 1400px; height: 788px; border: 1px solid #5c5b5b; display: flex; flex-direction: column; background: #f0f0f0; }
svg { flex: none; fill: none; }
.title { height: 26px; flex: none; background: #352f30; color: #fff; display: grid; grid-template-columns: 1fr auto 1fr; align-items: center; }
.caption { grid-column: 2; font-weight: bold; font-size: 10.500px; -webkit-text-stroke: 0; }
.wbtns { display: flex; justify-content: flex-end; align-items: center; gap: 20px; padding-right: 6px; }
.wbtns svg:nth-child(2) { margin-right: -7px; }
.menu { height: 16px; flex: none; display: grid; grid-template-columns: 46px 30px 34px 38px 51px 47px 43px 42px 57px 33px 37px 64px 40px; padding: 1px 0 0 7px; white-space: nowrap; }
.menu u { text-underline-offset: 1px; }
.bar { display: flex; align-items: center; flex: none; background: #f3f3f3; border-bottom: 1px solid #bdbdbd; box-shadow: inset 0 1px #fafafa; }
.bar1 { height: 29px; padding-bottom: 1px; }
.bar2 { height: 29px; }
.bar3 { height: 27px; }
.bar svg { width: 24px; height: 24px; padding: 3px 2.500px 2px; }
.bar .on { border: 1px solid #aaa; border-radius: 2px; background: #dcdcdc; padding: 1px; }
.grip { width: 12px; height: 10px; flex: none; background: radial-gradient(circle, #bbb 0.700px, transparent 1px) 0 0 / 3px 3px content-box; padding: 0 4px; }
.grip.first { width: 9px; padding: 0 4px 0 2px; }
.grip.narrow { width: 11px; }
.gap { width: 5px; flex: none; }
.line { width: 6px; height: 16px; background: linear-gradient(90deg, transparent 2px, #bbb 2px 3px, transparent 3px); }
.dd { width: 9px; flex: none; display: flex; justify-content: center; }
.dd::after { content: ""; border: 3px solid transparent; border-top-color: #352f30; border-bottom: 0; }
.dd.off::after { border-top-color: #bbb; }
main { flex: 1; min-height: 0; display: flex; }
aside { width: 355px; flex: none; display: flex; flex-direction: column; }
.dock { width: 351px; display: flex; flex-direction: column; }
.dock h2 { margin: 0; height: 15px; flex: none; padding: 0 1px 0 3px; font: inherit; display: flex; justify-content: space-between; align-items: center; }
.dock h2 span { display: flex; gap: 1px; }
.dock h2 svg { width: 9px; height: 9px; }
.tools { flex: none; display: flex; align-items: center; gap: 6.300px; height: 22px; padding: 0 0 1px 5px; }
.tools svg { width: 12px; height: 12px; }
.tools .dd { margin: 0 -1px 0 -6px; }
.browser { height: 381px; }
.treebox { flex: 1; min-height: 0; display: flex; background: #fff; border: 1px solid #c0c0c0; border-left: 0; overflow: hidden; }
.tree { flex: 1; list-style: none; margin: 0; padding: 1px 0 0; }
.tree li { height: 13.840px; display: flex; align-items: center; padding-left: 17px; white-space: nowrap; line-height: 13.840px; }
.tree li svg { width: 12px; height: 12px; margin-right: 4px; }
.tree li .thin { width: 10px; height: 10px; margin: 0 5px 0 1px; }
.tree li::before { content: ""; width: 0; height: 0; margin-left: -11px; margin-right: 11px; flex: none; }
.tree .c::before { border: 2.500px solid transparent; border-left: 3px solid #352f30; border-right: 0; margin-right: 8px; }
.tree .o::before { border: 3px solid transparent; border-top-color: #352f30; border-bottom: 0; margin-left: -12px; margin-right: 6px; }
.tree .l1 { padding-left: 32px; }
.tree .l2 { padding-left: 46px; }
.tree .l3 { padding-left: 61px; }
.tree .sel { width: 168px; background: #3f8bbd; color: #fff; -webkit-text-stroke-width: .1px; }
.scroll { width: 10px; border-left: 1px solid #c5c5c5; background: #f1f1f1; display: flex; flex-direction: column; }
.scroll i { display: flex; justify-content: center; align-items: center; height: 9px; background: #f7f7f7; border-bottom: 1px solid #c5c5c5; }
.scroll .thumb { height: 25px; margin-top: auto; background: #dedede; border-top: 1px solid #bbb; }
.scroll .up::after { content: ""; border: 3px solid transparent; border-bottom-color: #352f30; border-top: 0; }
.scroll .down { border-bottom: 0; }
.scroll .down::after { content: ""; border: 3px solid transparent; border-top-color: #352f30; border-bottom: 0; }
.layers { flex: 1; padding-top: 3px; }
.layers h2 { height: 17px; padding-bottom: 1px; }
.layers .tools { height: 20px; padding-bottom: 3px; }
.layerbox { flex: 1; background: #fff; border: 1px solid #c0c0c0; border-left: 0; }
.layer { height: 14px; background: #3f8bbd; color: #fff; display: flex; align-items: center; padding-left: 17px; font-weight: bold; font-size: 10.500px; border-right: 2px solid #dceaf3; -webkit-text-stroke: 0; }
.layer span { text-decoration: underline; text-underline-offset: 2px; text-decoration-style: dotted; }
.check { width: 10px; height: 10px; }
.swatch { width: 10px; height: 10px; margin: 0 5px 0 6px; background: repeating-linear-gradient(45deg, #e5728c 0 1px, #8a6f72 1px 2px); }
.map { flex: 1; background: #fff; border-left: 1px solid #bdbdbd; border-top: 1px solid #bdbdbd; overflow: hidden; }
.map svg { display: block; }
.map path { fill: #e5728c; stroke: #3f3a3b; stroke-width: 1px; stroke-linejoin: round; vector-effect: non-scaling-stroke; }
footer { height: 23px; flex: none; border-top: 1px solid #bbb; display: flex; align-items: center; padding-left: 2px; font-size: 9.100px; letter-spacing: -.2px; white-space: nowrap; }
.locate { width: 200px; height: 19px; border: 1px solid #b5b5b5; border-radius: 2px; background: #fff; display: flex; align-items: center; gap: 4px; padding-left: 6px; font-size: 10.800px; letter-spacing: 0; color: #77696b; -webkit-text-stroke: 0; }
.locate svg, .stat svg { width: 11px; height: 11px; }
.stat { flex: 1; display: flex; align-items: center; margin-left: 551px; }
.stat > * { flex: none; }
.field { height: 17px; border: 1px solid #b5b5b5; border-radius: 2px; background: #fff; display: flex; align-items: center; justify-content: space-between; padding-left: 4px; }
.combo, .spin { width: 14px; height: 15px; border-left: 1px solid #c5c5c5; background: #f5f5f5; display: flex; flex-direction: column; align-items: center; justify-content: center; gap: 3px; }
.spin { width: 9px; }
.combo::after, .spin::after { content: ""; border: 3px solid transparent; border-top-color: #352f30; border-bottom: 0; }
.spin::before { content: ""; border: 3px solid transparent; border-bottom-color: #352f30; border-top: 0; }
.f81 { width: 81px; }
.f70 { width: 70px; padding-left: 1px; }
.f71 { width: 71px; }
.f69 { width: 69px; }
.w46 { width: 46px; }
.w23 { width: 23px; }
.w41 { width: 41px; }
.w42 { width: 42px; }
.w61 { width: 61px; margin-left: 1px; }
.m3 { margin-left: 3px; }
.m5 { margin-left: 5px; }
.m7 { margin-left: 7px; }
.m8 { margin-left: 8px; }
.m10 { margin-left: 10px; }
.stat .cb { width: 10px; height: 10px; margin: 0 3px 0 4px; }
```
